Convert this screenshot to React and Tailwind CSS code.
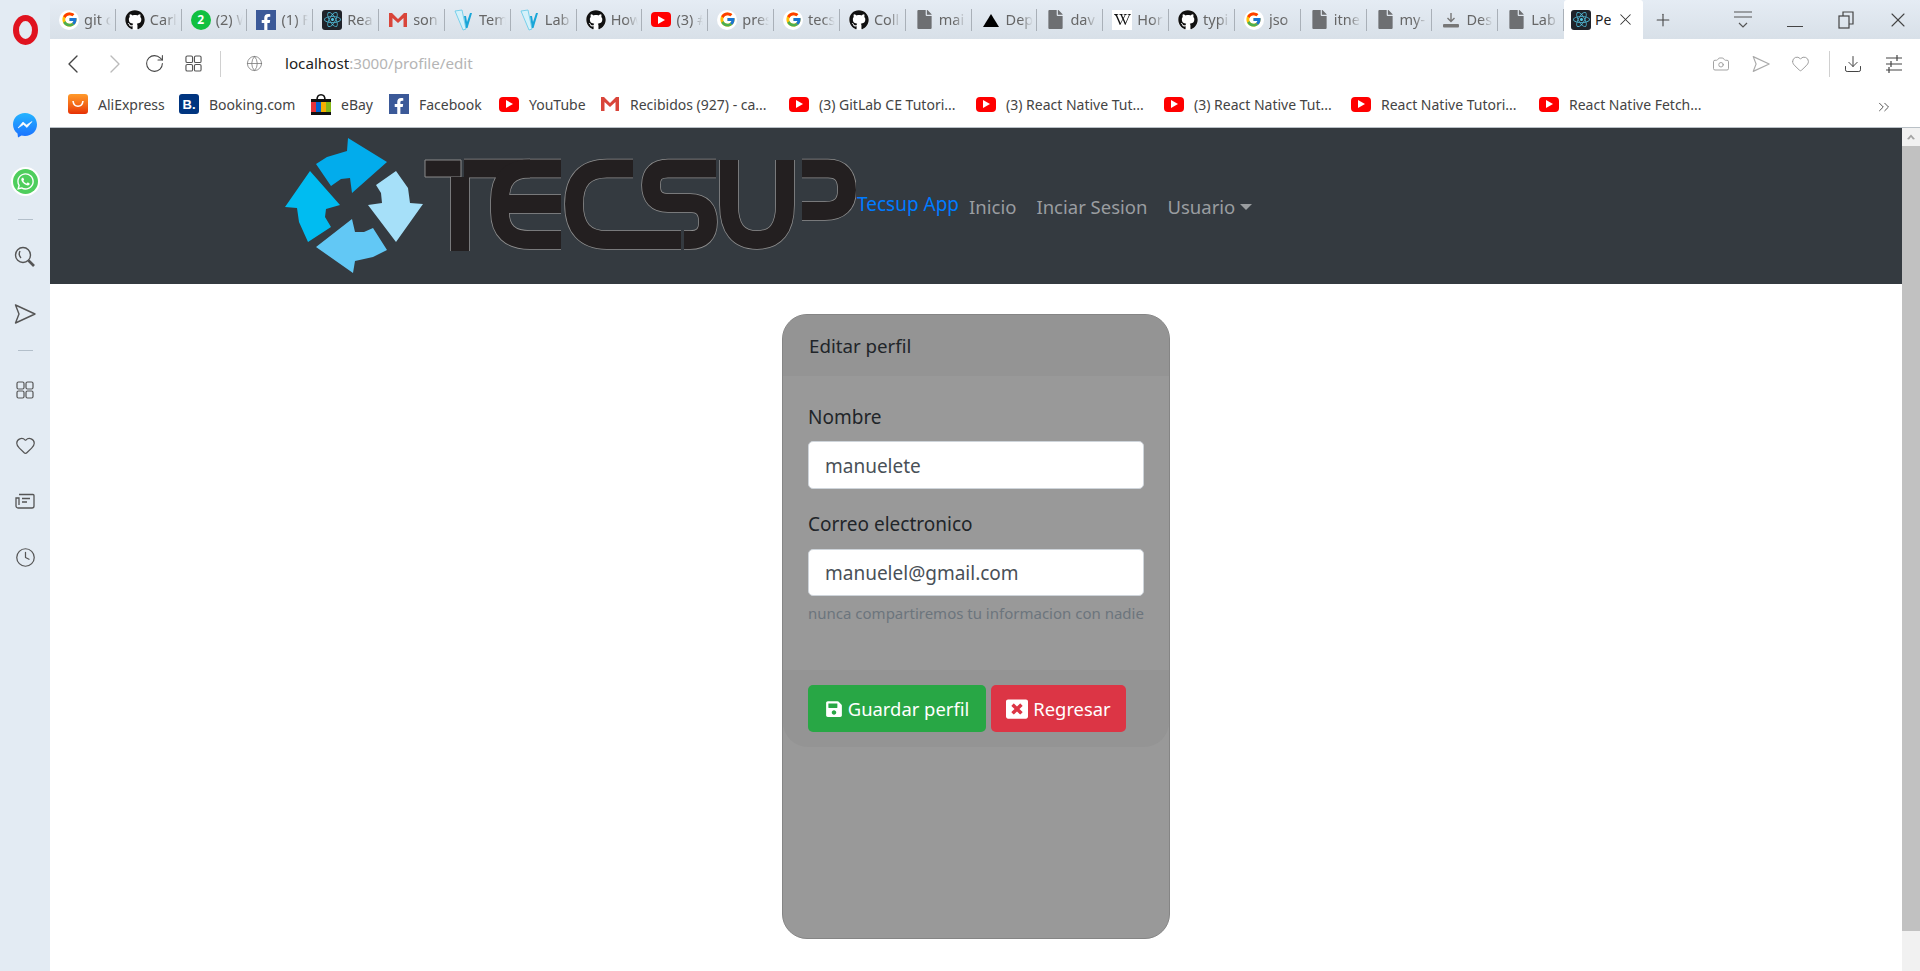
import React from "react";
import { FaGithub, FaFacebookF, FaReact, FaFile, FaSave, FaWindowClose, FaWhatsapp, FaWikipediaW } from "react-icons/fa";
import { FcGoogle } from "react-icons/fc";
import { ChevronLeft, ChevronRight, RotateCw, Globe, Camera, Heart, Download, X, Plus, Clock, ChevronsRight } from "lucide-react";

const Grid = ({ s = 18, c = "#555" }) => (
  <svg width={s} height={s} viewBox="0 0 18 18" fill="none" stroke={c} strokeWidth="1.2">
    <rect x="1" y="1" width="7" height="7" rx="1.5" /><rect x="10" y="1" width="7" height="7" rx="1.5" />
    <rect x="1" y="10" width="7" height="7" rx="1.5" /><rect x="10" y="10" width="7" height="7" rx="1.5" />
  </svg>
);
const SendTri = ({ s = 22, c = "#555" }) => (
  <svg width={s} height={s} viewBox="0 0 22 22" fill="none" stroke={c} strokeWidth="1.4" strokeLinejoin="round">
    <path d="M1.5 2 L21 11 L1.5 20 L5 11 Z" />
  </svg>
);
const G = () => <span className="flex h-5 w-5 shrink-0 items-center justify-center rounded-full bg-white"><FcGoogle size={17} /></span>;
const Gh = () => <span className="flex h-5 w-5 shrink-0 items-center justify-center rounded-full bg-white"><FaGithub size={20} color="#111" /></span>;
const Wa2 = () => <span className="flex h-5 w-5 shrink-0 items-center justify-center rounded-full bg-[#10c040] text-[12px] font-bold text-white">2</span>;
const Fb = () => <span className="flex h-5 w-5 shrink-0 items-end justify-center bg-[#3b5998]"><FaFacebookF size={16} color="#fff" /></span>;
const Re = () => <span className="flex h-5 w-5 shrink-0 items-center justify-center rounded-[3px] bg-[#20232a]"><FaReact size={17} color="#53c1de" /></span>;
const Gm = () => (
  <svg className="shrink-0" width="20" height="20" viewBox="0 0 20 20">
    <path d="M1 3 H4 L10 9 L16 3 H19 V17 H15.5 V8 L10 13 L4.5 8 V17 H1 Z" fill="#d9453a" />
  </svg>
);
const Yt = () => (
  <span className="flex h-[15px] w-5 shrink-0 items-center justify-center rounded-[4px] bg-[#f00]">
    <svg width="7" height="8" viewBox="0 0 7 8"><path d="M0 0 L7 4 L0 8 Z" fill="#fff" /></svg>
  </span>
);
const Vv = () => (
  <svg className="shrink-0" width="20" height="22" viewBox="0 0 20 22">
    <path d="M1 2 L8 1 L12 20 L9 21 Z" fill="#d5f1fa" stroke="#6ccdea" strokeWidth="0.9" />
    <path d="M10 7 H12 L13 13 L16 4 H18 L13.5 19 H12 Z" fill="#18a6d8" />
  </svg>
);
const Doc = () => <FaFile className="shrink-0" size={19} color="#6d6f72" />;
const Tri = () => <svg className="shrink-0" width="20" height="20" viewBox="0 0 20 20"><path d="M10 4 L18 17 H2 Z" fill="#000" /></svg>;
const Wk = () => <span className="flex h-5 w-5 shrink-0 items-center justify-center bg-white"><FaWikipediaW size={17} color="#111" /></span>;
const Dl = () => (
  <svg className="shrink-0" width="20" height="20" viewBox="0 0 20 20" fill="none" stroke="#777" strokeWidth="1.4">
    <path d="M10 3 V11 M6.5 8 L10 11.5 L13.5 8" /><rect x="2" y="14" width="16" height="3.5" fill="#777" stroke="none" rx="1" />
  </svg>
);

const tabs = [
  [G, "git c"], [Gh, "Carl"], [Wa2, "(2) W"], [Fb, "(1) F"], [Re, "Rea"], [Gm, "son"], [Vv, "Tem"], [Vv, "Lab"],
  [Gh, "How"], [Yt, "(3) #"], [G, "pres"], [G, "tecs"], [Gh, "Coll"], [Doc, "mai"], [Tri, "Dep"], [Doc, "dav"],
  [Wk, "Hor"], [Gh, "typi"], [G, "jso"], [Doc, "itne"], [Doc, "my-"], [Dl, "Des"], [Doc, "Lab"],
];

const Ali = () => (
  <span className="flex h-5 w-5 shrink-0 items-center justify-center rounded-[3px] bg-gradient-to-b from-[#ff9a2a] to-[#e62e04]">
    <svg width="14" height="10" viewBox="0 0 14 10" fill="none"><path d="M2 2 C3 9 11 9 12 2" stroke="#fff" strokeWidth="1.6" /></svg>
  </span>
);
const Book = () => <span className="flex h-5 w-5 shrink-0 items-center justify-center rounded-[3px] bg-[#003580] text-[13px] font-bold leading-none text-white [font-family:'Liberation_Sans',sans-serif]">B.</span>;
const Ebay = () => (
  <svg className="shrink-0" width="20" height="24" viewBox="0 0 20 24">
    <path d="M6 8 C6 1 14 1 14 8" fill="none" stroke="#111" strokeWidth="1.6" />
    <rect x="0" y="7" width="20" height="3" fill="#111" /><rect x="0" y="20" width="20" height="3" fill="#111" />
    <rect x="0" y="10" width="5" height="10" fill="#e53238" /><rect x="5" y="10" width="5" height="10" fill="#0064d2" />
    <rect x="10" y="10" width="5" height="10" fill="#f5af02" /><rect x="15" y="10" width="5" height="10" fill="#86b817" />
  </svg>
);
const bookmarks = [
  [Ali, "AliExpress", "w-[111px]"], [Book, "Booking.com", "w-[132px]"], [Ebay, "eBay", "w-[78px]"], [Fb, "Facebook", "w-[110px]"],
  [Yt, "YouTube", "w-[101px]"], [Gm, "Recibidos (927) - ca...", "w-[189px]"], [Yt, "(3) GitLab CE Tutori...", "w-[187px]"],
  [Yt, "(3) React Native Tut...", "w-[188px]"], [Yt, "(3) React Native Tut...", "w-[187px]"], [Yt, "React Native Tutori...", "w-[188px]"], [Yt, "React Native Fetch...", "w-[188px]"],
];

const font = "[font-family:'Noto_Sans','Open_Sans',sans-serif]";

function Logo() {
  const bars = [
    "M464 168.5 H561", "M460 177 V251",
    "M530 168.5 Q500 168.5 500 200 V212 Q500 240 530 240 H561", "M505 204 H561",
    "M633 168.5 H607 Q574 168.5 574 204 Q574 240 607 240 H681",
    "M716 168.5 H668 Q651 168.5 651 185 Q651 203 668 203 H690 Q708 203 708 222 Q708 240 690 240 H684",
    "M729 160 V205 Q729 240 757 240 Q785 240 785 205 V160",
    "M802 168.5 H828 Q847 168.5 847 190 Q847 211 825 211 H802",
  ];
  return (
    <svg className="shrink-0" width="572" height="138" viewBox="284 137 572 138">
      <path d="M316 164 L327 157 L347 151 L348 138 L387 162 L352 193 L350 178 L341 179 L331 186 Z" fill="#02acec" />
      <path d="M310 171 L340 205 L326 209 L325 217 L331 227 L308 242 L299 222 L297 208 L285 207 Z" fill="#00bcf1" />
      <path d="M352 219 L355 232 L364 232 L373 228 L387 250 L373 257 L355 261 L353 273 L316 247 Z" fill="#62c8f5" />
      <path d="M396 171 L408 188 L410 203 L423 204 L396 242 L368 205 L382 203 L381 193 L376 185 Z" fill="#a6e0f9" />
      <path d="M425 160 H461 V177 H425 Z" fill="#231f20" stroke="#8a8a8a" strokeWidth="1" />
      <g fill="none" strokeLinecap="butt" strokeLinejoin="round">
        {bars.map((d) => <path key={d} d={d} stroke="#8f8f8f" strokeWidth="19.5" />)}
        {bars.map((d) => <path key={d + "i"} d={d} stroke="#231f20" strokeWidth="18" />)}
      </g>
    </svg>
  );
}

const Tab = ({ Icon, label }) => (
  <div className="flex h-[39px] w-[65.83px] shrink-0 items-center pl-[9px]">
    <Icon />
    <span className="ml-[5px] w-[27px] overflow-hidden whitespace-nowrap text-[14.5px] text-[#666] [mask-image:linear-gradient(to_right,black_55%,transparent)]">{label}</span>
    <span className="ml-auto h-[22px] w-px bg-[#a9b0b8]" />
  </div>
);

export default function App() {
  return (
    <div className={`flex h-[971px] w-[1920px] overflow-hidden bg-white ${font}`}>
      <aside className="flex w-[50px] shrink-0 flex-col items-center bg-[#e3ebf3]">
        <svg className="mt-[15px]" width="25" height="30" viewBox="0 0 25 30">
          <ellipse cx="12.5" cy="15" rx="9.5" ry="12" fill="none" stroke="#e0131f" strokeWidth="6" />
        </svg>
        <svg className="mt-[67px]" width="26" height="26" viewBox="0 0 26 26">
          <defs>
            <linearGradient id="msg" x1="0" y1="0" x2="0" y2="1"><stop offset="0" stopColor="#25b4ff" /><stop offset="1" stopColor="#1a70ff" /></linearGradient>
          </defs>
          <path d="M13 1 C20 1 25 6 25 12.5 C25 19 20 24 13 24 C11.5 24 10.5 23.8 9.5 23.5 L6 25.5 L5.5 21.5 C2.5 19.5 1 16 1 12.5 C1 6 6 1 13 1 Z" fill="url(#msg)" />
          <path d="M6 16 L11 10 L14.5 13 L20 9.5 L15 15.5 L11.5 12.5 Z" fill="#fff" stroke="#fff" strokeWidth="0.6" />
        </svg>
        <span className="mt-[31px] flex h-[25px] w-[25px] items-center justify-center rounded-full bg-[#4fce5d] ring-2 ring-white">
          <FaWhatsapp size={19} color="#fff" />
        </span>
        <span className="mt-[25px] h-px w-[15px] bg-[#b3bfca]" />
        <svg className="mt-[26px]" width="22" height="22" viewBox="0 0 22 22" fill="none" stroke="#555" strokeWidth="1.4">
          <circle cx="9" cy="9" r="7.5" /><path d="M14.5 14.5 L20 20" strokeWidth="2.6" /><path d="M6 5 Q4 9 7 12" />
        </svg>
        <span className="mt-[35px]"><SendTri /></span>
        <span className="mt-[25px] h-px w-[15px] bg-[#b3bfca]" />
        <span className="mt-[30px]"><Grid /></span>
        <Heart className="mt-[36px]" size={21} color="#555" strokeWidth={1.4} />
        <svg className="mt-[37px]" width="20" height="16" viewBox="0 0 20 16" fill="none" stroke="#555" strokeWidth="1.3">
          <path d="M4 1.5 H18 A1 1 0 0 1 19 2.5 V13 A2 2 0 0 1 17 15 H3 A2 2 0 0 1 1 13 V5 H4 V12" /><path d="M7 5.5 H15 M7 9 H12" />
        </svg>
        <Clock className="mt-[38px]" size={21} color="#555" strokeWidth={1.4} />
      </aside>

      <div className="flex min-w-0 flex-1 flex-col">
        <div className="flex h-[39px] shrink-0 items-center bg-gradient-to-b from-[#e5ecf4] to-[#d8e0e8]">
          {tabs.map(([Icon, label], i) => <Tab key={i} Icon={Icon} label={label} />)}
          <div className="flex h-[39px] w-[79px] shrink-0 items-center rounded-t-[3px] bg-white pl-[7px]">
            <Re />
            <span className="ml-[4px] w-[16px] overflow-hidden text-[14px] text-[#222]">Pe</span>
            <X className="ml-[5px]" size={19} color="#333" strokeWidth={1.3} />
          </div>
          <Plus className="ml-[10px]" size={20} color="#444" strokeWidth={1.3} />
          <svg className="ml-[61px]" width="18" height="20" viewBox="0 0 18 20" fill="none" stroke="#555" strokeWidth="1.2">
            <path d="M0 2 H18 M0 7 H18 M5 13 L9 17 L13 13" />
          </svg>
          <span className="ml-[35px] mt-[14px] h-px w-[16px] bg-[#444]" />
          <svg className="ml-[35px]" width="16" height="18" viewBox="0 0 16 18" fill="none" stroke="#444" strokeWidth="1.2">
            <rect x="1" y="5" width="10" height="12" /><path d="M5 5 V1 H15 V13 H11" />
          </svg>
          <X className="ml-[32px]" size={24} color="#444" strokeWidth={1.1} />
        </div>

        <div className="flex h-[49px] shrink-0 items-center bg-white pl-[7px]">
          <ChevronLeft size={32} color="#444" strokeWidth={1} />
          <ChevronRight className="ml-[10px]" size={32} color="#bbb" strokeWidth={1} />
          <RotateCw className="ml-[12.5px]" size={21} color="#444" strokeWidth={1.2} />
          <span className="ml-[20.5px]"><Grid s={17} /></span>
          <span className="ml-[18px] h-[26px] w-px bg-[#d0d0d0]" />
          <Globe className="ml-[25px]" size={17} color="#777" strokeWidth={1.1} />
          <span className="ml-[22px] whitespace-nowrap text-[15.2px] text-[#222]">localhost<span className="text-[#b5b5b5]">:3000/profile/edit</span></span>
          <div className="ml-auto flex items-center pr-[17px]">
            <Camera size={18} color="#999" strokeWidth={1.2} />
            <span className="ml-[22px]"><SendTri s={18} c="#aaa" /></span>
            <Heart className="ml-[21px]" size={19} color="#999" strokeWidth={1.2} />
            <span className="ml-[19px] h-[26px] w-px bg-[#d0d0d0]" />
            <Download className="ml-[13px]" size={20} color="#444" strokeWidth={1.2} />
            <svg className="ml-[22px]" width="18" height="20" viewBox="0 0 18 20" fill="none" stroke="#444" strokeWidth="1.2">
              <path d="M1 4 H17 M1 10 H17 M1 16 H17 M12 1 V7 M6 7 V13 M4 13 V19" />
            </svg>
          </div>
        </div>

        <div className="flex h-[40px] shrink-0 items-center border-b border-[#b9c0c6] bg-white pb-[7px] pl-[18px]">
          {bookmarks.map(([Icon, label, w], i) => (
            <div key={i} className={`flex shrink-0 items-center ${w}`}>
              <Icon />
              <span className="ml-[10px] whitespace-nowrap text-[14px] text-[#444]">{label}</span>
            </div>
          ))}
          <ChevronsRight className="ml-auto mr-[27px] mt-[5px]" size={18} color="#444" strokeWidth={1.2} />
        </div>

        <div className="flex min-h-0 flex-1">
          <main className="min-w-0 flex-1">
            <nav className="flex h-[156px] items-center bg-[#343a40] pl-[234px]">
              <Logo />
              <a className="ml-[1px] mb-[3px] text-[19px] text-[#007bff]">Tecsup App</a>
              <div className="ml-[10px] flex items-center pt-[2px] text-[18.5px] text-[#9a9da0]">
                <a>Inicio</a>
                <a className="ml-[20px]">Inciar Sesion</a>
                <a className="ml-[20px]">Usuario</a>
                <span className="ml-[5px] h-0 w-0 border-x-[6px] border-t-[6px] border-x-transparent border-t-[#9a9da0]" />
              </div>
            </nav>
            <div className="flex justify-center pt-[30px]">
              <section className="h-[625px] w-[388px] rounded-[25px] border border-[#858585] bg-[#999999]">
                <header className="flex h-[61px] items-center rounded-t-[24px] bg-[#949494] px-[26px] pt-[2px] text-[18.7px] text-[#212529]">Editar perfil</header>
                <div className="h-[294px] px-[25px] pt-[26px]">
                  <label className="block text-[19px] leading-[30px] text-[#212529]">Nombre</label>
                  <input readOnly value="manuelete" className="mt-[9px] block h-[47.5px] w-[336px] rounded-[5px] border border-[#ced4da] bg-white px-[16px] pt-[2px] text-[19px] text-[#495057] outline-none" />
                  <label className="mt-[20px] block text-[19px] leading-[30px] text-[#212529]">Correo electronico</label>
                  <input readOnly value="manuelel@gmail.com" className="mt-[10px] block h-[47.5px] w-[336px] rounded-[5px] border border-[#ced4da] bg-white px-[16px] pt-[2px] text-[19px] text-[#495057] outline-none" />
                  <small className="mt-[6px] block whitespace-nowrap text-[15px] text-[#6c757d]">nunca compartiremos tu informacion con nadie</small>
                </div>
                <footer className="flex h-[77px] gap-[5px] rounded-b-[25px] bg-[#949494] px-[25px] pt-[15px]">
                  <button className="flex h-[47px] w-[178px] items-center justify-center gap-[5px] rounded-[5px] bg-[#28a745] pt-[1px] text-[18.4px] text-white"><FaSave size={18} color="#fff" />Guardar perfil</button>
                  <button className="flex h-[47px] w-[135px] items-center justify-center gap-[5px] rounded-[5px] bg-[#dc3545] pt-[1px] text-[18.4px] text-white"><FaWindowClose size={22} color="#fff" />Regresar</button>
                </footer>
              </section>
            </div>
          </main>
          <div className="flex h-full w-[18px] shrink-0 flex-col bg-[#f1f1f1]">
            <div className="flex h-[18px] shrink-0 items-center justify-center">
              <svg width="8" height="6" viewBox="0 0 8 6"><path d="M0 5 L4 0.5 L8 5 L6 5.5 L4 3 L2 5.5 Z" fill="#a3a3a3" /></svg>
            </div>
            <div className="h-[785px] bg-[#c1c1c1]" />
          </div>
        </div>
      </div>
    </div>
  );
}
